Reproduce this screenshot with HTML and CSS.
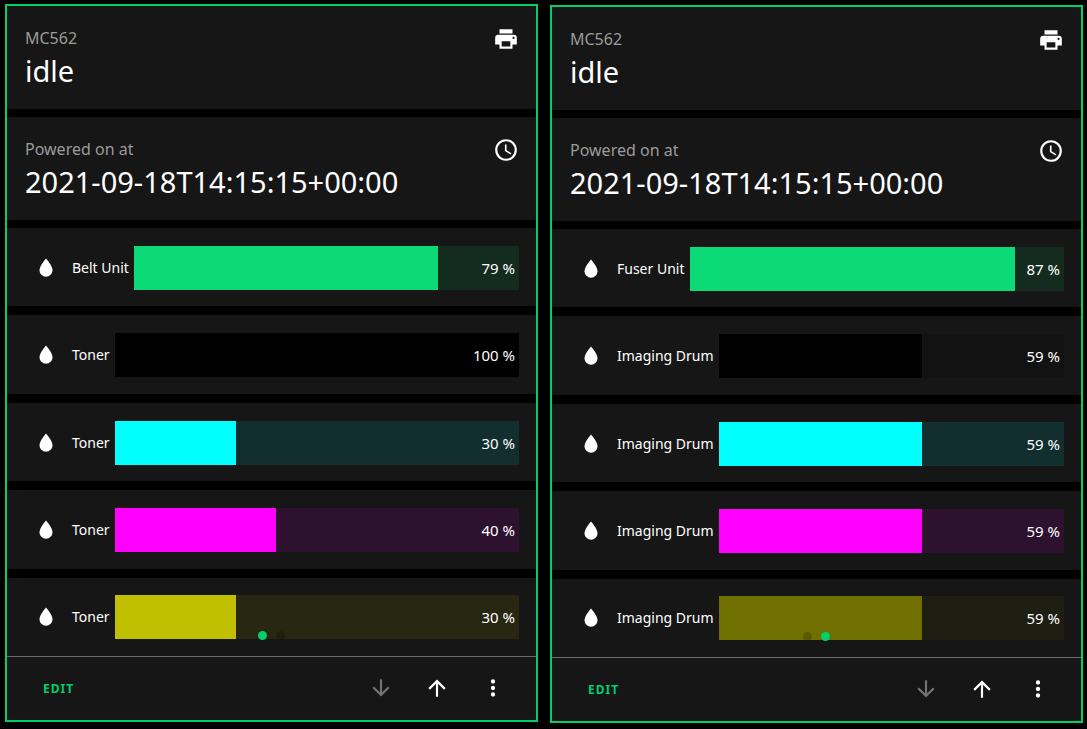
FILE: index.html
```
<!DOCTYPE html>
<html lang="en">
<head>
<meta charset="utf-8">
<meta name="viewport" content="width=device-width, initial-scale=1">
<title>Printer dashboard</title>
<link rel="stylesheet" href="styles.css">
</head>
<body>
<svg class="sprite" aria-hidden="true">
  <symbol id="printer" viewBox="0 0 24 24"><path d="M18,3H6V7H18M19,12A1,1 0 0,1 18,11A1,1 0 0,1 19,10A1,1 0 0,1 20,11A1,1 0 0,1 19,12M16,19H8V14H16M19,8H5A3,3 0 0,0 2,11V17H6V21H18V17H22V11A3,3 0 0,0 19,8Z"/></symbol>
  <symbol id="clock" viewBox="0 0 24 24"><path d="M12,20A8,8 0 0,0 20,12A8,8 0 0,0 12,4A8,8 0 0,0 4,12A8,8 0 0,0 12,20M12,2A10,10 0 0,1 22,12A10,10 0 0,1 12,22C6.47,22 2,17.5 2,12A10,10 0 0,1 12,2M12.5,7V12.25L17,14.92L16.25,16.15L11,13V7H12.5Z"/></symbol>
  <symbol id="water" viewBox="0 0 24 24"><path d="M12,20A6,6 0 0,1 6,14C6,10 12,3.25 12,3.25C12,3.25 18,10 18,14A6,6 0 0,1 12,20Z"/></symbol>
  <symbol id="down" viewBox="0 0 24 24"><path d="M11,4H13V16L18.5,10.5L19.92,11.92L12,19.84L4.08,11.92L5.5,10.5L11,16V4Z"/></symbol>
  <symbol id="up" viewBox="0 0 24 24"><path d="M13,20H11V8L5.5,13.5L4.08,12.08L12,4.16L19.92,12.08L18.5,13.5L13,8V20Z"/></symbol>
  <symbol id="dots" viewBox="0 0 24 24"><path d="M12,16A2,2 0 0,1 14,18A2,2 0 0,1 12,20A2,2 0 0,1 10,18A2,2 0 0,1 12,16M12,10A2,2 0 0,1 14,12A2,2 0 0,1 12,14A2,2 0 0,1 10,12A2,2 0 0,1 12,10M12,4A2,2 0 0,1 14,6A2,2 0 0,1 12,8A2,2 0 0,1 10,6A2,2 0 0,1 12,4Z"/></symbol>
</svg>
<main class="board">
  <section class="panel">
    <div class="stack">
      <article class="entity">
        <div class="entity-text"><h2 class="entity-name">MC562</h2><p class="entity-state">idle</p></div>
        <svg class="icon"><use href="#printer"/></svg>
      </article>
      <article class="entity">
        <div class="entity-text"><h2 class="entity-name">Powered on at</h2><p class="entity-state">2021-09-18T14:15:15+00:00</p></div>
        <svg class="icon"><use href="#clock"/></svg>
      </article>
      <div class="bars">
        <div class="row"><svg class="icon"><use href="#water"/></svg><span class="label">Belt Unit</span><div class="bar green"><div class="fill" style="width:79%"></div><span class="value">79 %</span></div></div>
        <div class="row"><svg class="icon"><use href="#water"/></svg><span class="label">Toner</span><div class="bar black"><div class="fill" style="width:100%"></div><span class="value">100 %</span></div></div>
        <div class="row"><svg class="icon"><use href="#water"/></svg><span class="label">Toner</span><div class="bar cyan"><div class="fill" style="width:30%"></div><span class="value">30 %</span></div></div>
        <div class="row"><svg class="icon"><use href="#water"/></svg><span class="label">Toner</span><div class="bar magenta"><div class="fill" style="width:40%"></div><span class="value">40 %</span></div></div>
        <div class="row"><svg class="icon"><use href="#water"/></svg><span class="label">Toner</span><div class="bar yellow"><div class="fill" style="width:30%"></div><span class="value">30 %</span></div></div>
      </div>
      <div class="pager"><span class="dot active"></span><span class="dot"></span></div>
    </div>
    <footer class="actions">
      <button class="edit" type="button">EDIT</button>
      <button class="tool" type="button" aria-label="Move down" disabled><svg class="icon"><use href="#down"/></svg></button>
      <button class="tool" type="button" aria-label="Move up"><svg class="icon"><use href="#up"/></svg></button>
      <button class="tool" type="button" aria-label="More options"><svg class="icon"><use href="#dots"/></svg></button>
    </footer>
  </section>
  <section class="panel">
    <div class="stack">
      <article class="entity">
        <div class="entity-text"><h2 class="entity-name">MC562</h2><p class="entity-state">idle</p></div>
        <svg class="icon"><use href="#printer"/></svg>
      </article>
      <article class="entity">
        <div class="entity-text"><h2 class="entity-name">Powered on at</h2><p class="entity-state">2021-09-18T14:15:15+00:00</p></div>
        <svg class="icon"><use href="#clock"/></svg>
      </article>
      <div class="bars">
        <div class="row"><svg class="icon"><use href="#water"/></svg><span class="label">Fuser Unit</span><div class="bar green"><div class="fill" style="width:87%"></div><span class="value">87 %</span></div></div>
        <div class="row"><svg class="icon"><use href="#water"/></svg><span class="label">Imaging Drum</span><div class="bar black"><div class="fill" style="width:59%"></div><span class="value">59 %</span></div></div>
        <div class="row"><svg class="icon"><use href="#water"/></svg><span class="label">Imaging Drum</span><div class="bar cyan"><div class="fill" style="width:59%"></div><span class="value">59 %</span></div></div>
        <div class="row"><svg class="icon"><use href="#water"/></svg><span class="label">Imaging Drum</span><div class="bar magenta"><div class="fill" style="width:59%"></div><span class="value">59 %</span></div></div>
        <div class="row"><svg class="icon"><use href="#water"/></svg><span class="label">Imaging Drum</span><div class="bar olive"><div class="fill" style="width:59%"></div><span class="value">59 %</span></div></div>
      </div>
      <div class="pager"><span class="dot"></span><span class="dot active"></span></div>
    </div>
    <footer class="actions">
      <button class="edit" type="button">EDIT</button>
      <button class="tool" type="button" aria-label="Move down" disabled><svg class="icon"><use href="#down"/></svg></button>
      <button class="tool" type="button" aria-label="Move up"><svg class="icon"><use href="#up"/></svg></button>
      <button class="tool" type="button" aria-label="More options"><svg class="icon"><use href="#dots"/></svg></button>
    </footer>
  </section>
</main>
</body>
</html>
```
FILE: styles.css
```
* { box-sizing: border-box; }

body {
  margin: 0;
  background: #000;
  color: #fff;
  font-family: "Noto Sans", "Open Sans", sans-serif;
}

.sprite { display: none; }

.board {
  display: grid;
  grid-template-columns: 1fr 1fr;
  gap: 12px;
  min-height: 100vh;
  padding: 4px 4px 6px 5px;
}

.panel {
  display: flex;
  flex-direction: column;
  margin-bottom: 1px;
  border: 2px solid #00cf6b;
}

.panel + .panel {
  margin-top: 1px;
  margin-bottom: 0;
}

.stack {
  position: relative;
  flex: 1;
  display: flex;
  flex-direction: column;
  gap: 8px;
}

.icon {
  flex: none;
  display: block;
  width: 26px;
  height: 26px;
  fill: currentColor;
}

.entity {
  display: flex;
  justify-content: space-between;
  align-items: flex-start;
  padding: 20px 17px 18px 18px;
  background: #161616;
}

.entity-name {
  margin: 0;
  color: #9b9b9b;
  font-size: 16px;
  font-weight: 400;
  line-height: 24px;
}

.entity-state {
  margin: 0;
  font-size: 29px;
  line-height: 41px;
}

.bars {
  flex: 1;
  display: flex;
  flex-direction: column;
  gap: 9px;
}

.row {
  flex: 1;
  display: flex;
  align-items: center;
  padding: 1px 17px 0 26px;
  background: #161616;
}

.label {
  margin-left: 13px;
  margin-right: 5px;
  font-size: 14px;
  line-height: 20px;
  white-space: nowrap;
}

.bar {
  position: relative;
  flex: 1;
  height: 44px;
}

.fill { height: 100%; }

.value {
  position: absolute;
  top: 12px;
  right: 4px;
  font-size: 15px;
  line-height: 20px;
}

.green { background: #142b1f; }
.green .fill { background: #0cda76; }
.black { background: #121212; }
.black .fill { background: #000; }
.cyan { background: #122e2e; }
.cyan .fill { background: #00ffff; }
.magenta { background: #2e112e; }
.magenta .fill { background: #ff00ff; }
.yellow { background: #282712; }
.yellow .fill { background: #c0c000; }
.olive { background: #1e1e12; }
.olive .fill { background: #707000; }

.pager {
  position: absolute;
  left: 0;
  right: 0;
  bottom: 16px;
  display: flex;
  justify-content: center;
  gap: 9px;
}

.dot {
  width: 9px;
  height: 9px;
  border-radius: 50%;
  background: rgba(0, 0, 0, 0.2);
}

.dot.active { background: #00cf6b; }

.actions {
  display: flex;
  align-items: center;
  height: 64px;
  padding: 0 15px 1px 26px;
  border-top: 1px solid #6b6b6b;
  background: #161616;
}

button {
  border: 0;
  background: none;
  color: #fff;
  font-family: inherit;
  cursor: pointer;
}

.edit {
  margin-right: auto;
  padding: 8px 10px;
  color: #00cf6b;
  font-size: 12px;
  font-weight: 700;
  letter-spacing: 1px;
}

.tool {
  padding: 15px;
}

.tool:disabled { color: #737373; }
```
